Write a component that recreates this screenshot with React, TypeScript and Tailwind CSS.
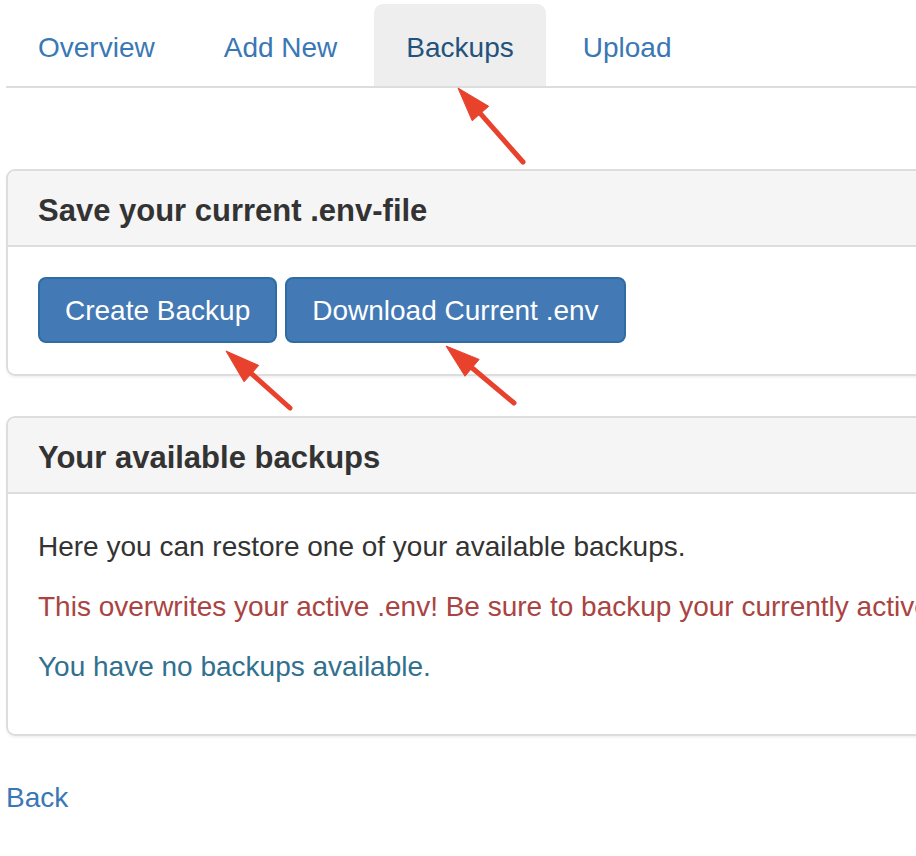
import React from "react";

type ArrowProps = { tip: [number, number]; tail: [number, number] };

// red annotation arrow: filled head at tip, rounded shaft to tail
const Arrow = ({ tip, tail }: ArrowProps) => {
  const dx = tail[0] - tip[0];
  const dy = tail[1] - tip[1];
  const len = Math.sqrt(dx * dx + dy * dy);
  const ux = dx / len;
  const uy = dy / len;
  const head = 34;
  const half = 11;
  const bx = tip[0] + ux * head;
  const by = tip[1] + uy * head;
  const p1 = `${bx - uy * half},${by + ux * half}`;
  const p2 = `${bx + uy * half},${by - ux * half}`;
  return (
    <g fill="#e8412c" stroke="#e8412c">
      <line
        x1={tip[0] + ux * (head - 6)}
        y1={tip[1] + uy * (head - 6)}
        x2={tail[0]}
        y2={tail[1]}
        strokeWidth={5}
        strokeLinecap="round"
      />
      <polygon points={`${tip[0]},${tip[1]} ${p1} ${p2}`} strokeWidth={1} strokeLinejoin="round" />
    </g>
  );
};

const tabs = ["Overview", "Add New", "Backups", "Upload"];

const App = () => {
  return (
    <div className="relative w-[916px] h-[856px] overflow-hidden bg-white font-['Liberation_Sans',Arial,sans-serif] text-[28px] leading-[40px] text-[#333]">
      <div className="w-[1300px] pl-[6px]">
        <ul className="flex gap-[5px] pt-[4px] border-b-2 border-[#ddd]">
          {tabs.map((t) => (
            <li key={t}>
              <a
                href="#"
                className={
                  t === "Backups"
                    ? "block h-[82px] px-[32px] pt-[24px] rounded-t-[9px] bg-[#eee] text-[#23527c]"
                    : "block h-[82px] px-[32px] pt-[24px] text-[#3a77b5]"
                }
              >
                {t}
              </a>
            </li>
          ))}
        </ul>

        <div className="mt-[81px] rounded-[9px] border-2 border-[#ddd] shadow-[0_2px_2px_rgba(0,0,0,0.05)]">
          <div className="rounded-t-[8px] border-b-2 border-[#ddd] bg-[#f5f5f5] px-[30px] pt-[23px] pb-[17px]">
            <h3 className="text-[31px] leading-[34px] font-bold">Save your current .env-file</h3>
          </div>
          <div className="flex gap-[8px] px-[30px] pt-[30px] pb-[31px]">
            <button className="h-[66px] px-[25px] pt-[2px] rounded-[8px] border-2 border-[#2e6da4] bg-[#4379b4] text-white">
              Create Backup
            </button>
            <button className="h-[66px] px-[25px] pt-[2px] rounded-[8px] border-2 border-[#2e6da4] bg-[#4379b4] text-white">
              Download Current .env
            </button>
          </div>
        </div>

        <div className="mt-[40px] rounded-[9px] border-2 border-[#ddd] shadow-[0_2px_2px_rgba(0,0,0,0.05)]">
          <div className="rounded-t-[8px] border-b-2 border-[#ddd] bg-[#f5f5f5] px-[30px] pt-[23px] pb-[17px]">
            <h3 className="text-[31px] leading-[34px] font-bold">Your available backups</h3>
          </div>
          <div className="px-[30px] pt-[33px] pb-[47px] space-y-[20px]">
            <p>Here you can restore one of your available backups.</p>
            <p className="text-[#a94442]">
              This overwrites your active .env! Be sure to backup your currently active .env before restoring.
            </p>
            <p className="text-[#31708f]">You have no backups available.</p>
          </div>
        </div>

        <a href="#" className="block mt-[42px] w-fit text-[#3a77b5]">
          Back
        </a>
      </div>

      <svg className="absolute inset-0 pointer-events-none" width={916} height={856}>
        <Arrow tip={[458, 88]} tail={[523, 162]} />
        <Arrow tip={[226, 351]} tail={[290, 408]} />
        <Arrow tip={[446, 346]} tail={[514, 403]} />
      </svg>
    </div>
  );
};

export default App;
